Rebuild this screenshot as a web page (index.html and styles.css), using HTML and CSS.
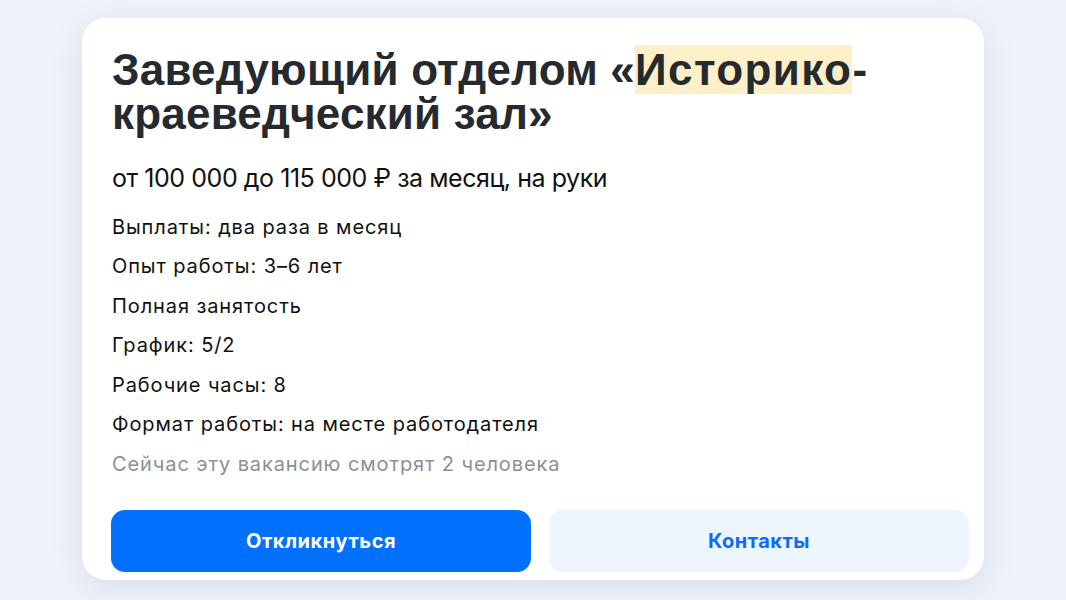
FILE: index.html
```html
<!DOCTYPE html>
<html lang="ru">
<head>
<meta charset="utf-8">
<link rel="stylesheet" href="styles.css">
</head>
<body>
<div class="page">
  <div class="card">
    <h1 class="title">Заведующий отделом «<span class="hl">Историко</span>-краеведческий зал»</h1>
    <div class="salary">от 100&nbsp;000 до 115&nbsp;000 ₽ за месяц, на руки</div>
    <div class="details">
      <div class="row">Выплаты: два раза в месяц</div>
      <div class="row">Опыт работы: 3–6 лет</div>
      <div class="row">Полная занятость</div>
      <div class="row">График: 5/2</div>
      <div class="row">Рабочие часы: 8</div>
      <div class="row">Формат работы: на месте работодателя</div>
      <div class="row muted">Сейчас эту вакансию смотрят 2 человека</div>
    </div>
    <div class="actions">
      <button class="btn primary">Откликнуться</button>
      <button class="btn secondary">Контакты</button>
    </div>
  </div>
</div>
</body>
</html>
```
FILE: styles.css
```css
html, body {
  margin: 0;
  padding: 0;
  background: #eef2fa;
}
body {
  width: 1066px;
  height: 600px;
  overflow: hidden;
  font-family: Inter, "Noto Sans", sans-serif;
}
.page {
  padding: 18px 0 0 82px;
}
.card {
  width: 902px;
  height: 562px;
  box-sizing: border-box;
  background: #fff;
  border-radius: 24px;
  box-shadow: 0 8px 30px rgba(120, 140, 180, 0.18);
  padding: 30px 15px 0 29px;
}
.title {
  margin: 0;
  padding-left: 1px;
  font-family: "Liberation Sans", Arial, sans-serif;
  font-weight: 700;
  font-size: 44px;
  line-height: 44px;
  letter-spacing: 0.2px;
  color: #262a2e;
  width: 800px;
}
.hl {
  background: #fdf0c8;
  letter-spacing: 1.4px;
}
.salary {
  margin-top: 27px;
  padding-left: 1px;
  font-size: 25px;
  line-height: 30px;
  color: #111;
  letter-spacing: -0.45px;
}
.details {
  margin-top: 21.5px;
  padding-left: 1px;
  display: flex;
  flex-direction: column;
  gap: 15.6px;
}
.row {
  font-size: 20px;
  line-height: 24px;
  letter-spacing: 0.9px;
  color: #111;
}
.muted {
  color: #8a9099;
}
.actions {
  margin-top: 34px;
  display: grid;
  grid-template-columns: 1fr 1fr;
  gap: 18px;
}
.btn {
  height: 62px;
  border: 0;
  border-radius: 14px;
  font-family: Inter, "Noto Sans", sans-serif;
  font-weight: 700;
  font-size: 20px;
  letter-spacing: 0.5px;
}
.primary {
  background: #0070ff;
  color: #fff;
}
.secondary {
  background: #edf5ff;
  color: #0a6cff;
}
```
